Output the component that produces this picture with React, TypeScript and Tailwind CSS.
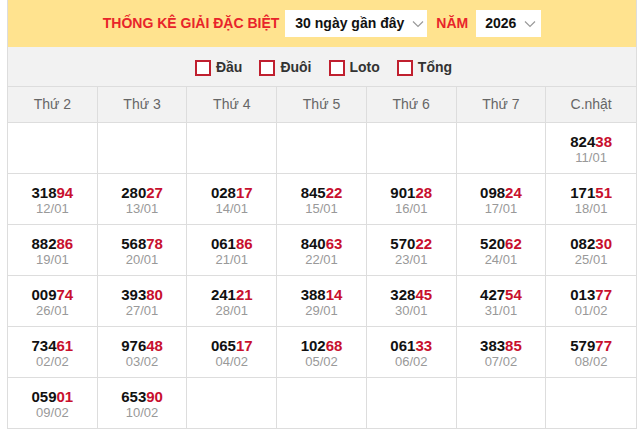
const days = ["Thứ 2", "Thứ 3", "Thứ 4", "Thứ 5", "Thứ 6", "Thứ 7", "C.nhật"];

type Cell = { num: string; date: string } | null;

const rows: Cell[][] = [
  [null, null, null, null, null, null, { num: "82438", date: "11/01" }],
  [
    { num: "31894", date: "12/01" },
    { num: "28027", date: "13/01" },
    { num: "02817", date: "14/01" },
    { num: "84522", date: "15/01" },
    { num: "90128", date: "16/01" },
    { num: "09824", date: "17/01" },
    { num: "17151", date: "18/01" },
  ],
  [
    { num: "88286", date: "19/01" },
    { num: "56878", date: "20/01" },
    { num: "06186", date: "21/01" },
    { num: "84063", date: "22/01" },
    { num: "57022", date: "23/01" },
    { num: "52062", date: "24/01" },
    { num: "08230", date: "25/01" },
  ],
  [
    { num: "00974", date: "26/01" },
    { num: "39380", date: "27/01" },
    { num: "24121", date: "28/01" },
    { num: "38814", date: "29/01" },
    { num: "32845", date: "30/01" },
    { num: "42754", date: "31/01" },
    { num: "01377", date: "01/02" },
  ],
  [
    { num: "73461", date: "02/02" },
    { num: "97648", date: "03/02" },
    { num: "06517", date: "04/02" },
    { num: "10268", date: "05/02" },
    { num: "06133", date: "06/02" },
    { num: "38385", date: "07/02" },
    { num: "57977", date: "08/02" },
  ],
  [
    { num: "05901", date: "09/02" },
    { num: "65390", date: "10/02" },
    null,
    null,
    null,
    null,
    null,
  ],
];

function Chevron() {
  return (
    <svg width="12" height="8" viewBox="0 0 12 8" className="ml-2">
      <path d="M1 1.5 6 6.5 11 1.5" fill="none" stroke="#9a9a9a" strokeWidth="1.2" />
    </svg>
  );
}

function Check({ label }: { label: string }) {
  return (
    <div className="flex items-center gap-[5px]">
      <span className="block h-[16px] w-[16px] border-2 border-[#c0202f] bg-white" />
      <span className="text-[14px] font-bold text-[#333]">{label}</span>
    </div>
  );
}

export default function App() {
  return (
    <div className="h-[432px] w-[642px] bg-white font-['Liberation_Sans',Arial,sans-serif]">
      <div className="ml-[7px] w-[630px] border-x border-b border-[#dddddd]">
        <div className="flex h-[47px] items-center justify-center bg-[#ffe38f]">
          <span className="text-[14px] font-bold text-[#e8242a]">THỐNG KÊ GIẢI ĐẶC BIỆT</span>
          <div className="ml-[6px] flex h-[27px] w-[142px] items-center bg-white pl-[10px]">
            <span className="text-[14px] font-bold text-[#111]">30 ngày gần đây</span>
            <Chevron />
          </div>
          <span className="ml-[9px] text-[14px] font-bold text-[#e8242a]">NĂM</span>
          <div className="ml-[8px] flex h-[27px] w-[65px] items-center bg-white pl-[9px]">
            <span className="text-[14px] font-bold text-[#111]">2026</span>
            <Chevron />
          </div>
        </div>
        <div className="flex h-[40px] items-center justify-center gap-[17px] border-b border-[#dddddd] bg-[#f2f2f2] pl-[3px] pt-[2px]">
          <Check label="Đầu" />
          <Check label="Đuôi" />
          <Check label="Loto" />
          <Check label="Tổng" />
        </div>
        <div className="grid grid-cols-7 border-b border-[#dddddd] bg-[#f2f2f2]">
          {days.map((d, i) => (
            <div
              key={d}
              className={`flex h-[35px] items-center justify-center text-[14px] text-[#666] ${i < 6 ? "border-r border-[#dddddd]" : ""}`}
            >
              {d}
            </div>
          ))}
        </div>
        {rows.map((row, r) => (
          <div key={r} className={`grid grid-cols-7 ${r < rows.length - 1 ? "border-b border-[#dddddd]" : ""}`}>
            {row.map((c, i) => (
              <div
                key={i}
                className={`flex h-[50px] flex-col items-center justify-center pt-[2px] ${i < 6 ? "border-r border-[#dddddd]" : ""}`}
              >
                {c && (
                  <>
                    <span className="text-[15px] font-bold leading-[16px] text-[#111]">
                      {c.num.slice(0, 3)}
                      <span className="text-[#c8102e]">{c.num.slice(3)}</span>
                    </span>
                    <span className="text-[13px] leading-[15px] text-[#999]">{c.date}</span>
                  </>
                )}
              </div>
            ))}
          </div>
        ))}
      </div>
    </div>
  );
}
